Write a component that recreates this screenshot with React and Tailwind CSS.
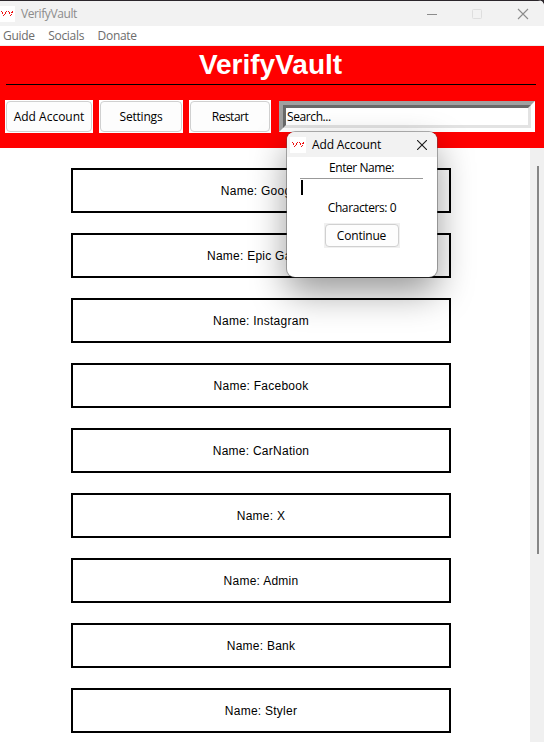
const ACCOUNTS = ['Google', 'Epic Games', 'Instagram', 'Facebook', 'CarNation', 'X', 'Admin', 'Bank', 'Styler'];

function Logo({ className }) {
  return (
    <svg className={className} width="16" height="16" viewBox="0 0 16 16" shapeRendering="crispEdges">
      <rect width="16" height="16" fill="#fff" />
      <path
        d="M2 5h1v1H2zM3 6h1v2H3zM4 9h1v1H4zM5 8h1v1H5zM6 6h1v2H6zM7 5h1v1H7zM9 5h1v1H9zM10 6h1v2h-1zM11 9h1v1h-1zM12 8h1v1h-1zM12 6h1v1h-1zM13 5h1v2h-1z"
        fill="#f01010"
      />
    </svg>
  );
}

function ToolButton({ className, children }) {
  return (
    <div className={`h-[33px] bg-white p-px ${className}`}>
      <button className="flex h-full w-full items-center justify-center rounded-[4px] border border-[#d0d0d0] bg-[#fdfdfd] pt-px text-[12px] whitespace-nowrap text-black">
        {children}
      </button>
    </div>
  );
}

function Dialog() {
  return (
    <div className="absolute top-[132px] left-[287px] h-[145px] w-[150px] rounded-[8px] bg-white shadow-[0_0_0_1px_rgba(80,80,80,0.45),0_16px_36px_rgba(0,0,0,0.4)]">
      <div className="flex h-[25px] items-center rounded-t-[8px] bg-[#f2f2f2] pl-[3px]">
        <Logo />
        <span className="ml-[6px] text-[12px] tracking-[-0.15px] text-black">Add Account</span>
        <svg className="mr-[10px] ml-auto" width="10" height="10" viewBox="0 0 10 10" stroke="#1a1a1a" strokeWidth="1.1">
          <path d="M0 0L10 10M10 0L0 10" />
        </svg>
      </div>
      <div className="flex h-[21px] items-center justify-center pt-px pr-px text-[12px] tracking-[-0.45px] text-black">
        Enter Name:
      </div>
      <div className="mx-[13px] h-[18px] w-[123px] border-t border-[#999] pt-px pl-px">
        <div className="h-[15px] w-[2px] bg-black" />
      </div>
      <div className="mt-[3px] flex h-[18px] items-center justify-center text-[12px] tracking-[-0.4px] text-black">
        Characters: 0
      </div>
      <div className="mx-auto mt-[6px] h-[25px] w-[76px] bg-[#f0f0f0] p-px">
        <button className="flex h-full w-full items-center justify-center rounded-[4px] border border-[#d0d0d0] bg-[#fdfdfd] pr-px text-[12px] tracking-[-0.2px] text-black">
          Continue
        </button>
      </div>
    </div>
  );
}

export default function App() {
  return (
    <div className="relative h-[742px] w-[544px] overflow-hidden bg-[#2b262b] font-['Open_Sans','Noto_Sans',sans-serif]">
      <div className="flex h-full flex-col overflow-hidden rounded-tr-[6px] bg-white">
        <div className="flex h-[26px] shrink-0 items-center border-t border-[#2b262b] bg-[#f2f2f2]">
          <Logo className="-ml-px" />
          <span className="ml-[6px] text-[12px] tracking-[-0.4px] text-[#8c8c8c]">VerifyVault</span>
          <svg className="ml-auto" width="117" height="24" viewBox="0 0 117 24" fill="none">
            <path d="M0 12.5H10" stroke="#8c8c8c" />
            <rect x="45.5" y="7.5" width="9" height="9" rx="1" stroke="#dedede" />
            <path d="M91 7L101 17M101 7L91 17" stroke="#8c8c8c" strokeWidth="1.1" />
          </svg>
        </div>
        <nav className="flex h-[20px] shrink-0 items-center gap-[13.5px] border-b border-[#eee] pl-[3px] text-[12px] tracking-[-0.3px] text-[#6d6d6d]">
          <span>Guide</span>
          <span>Socials</span>
          <span>Donate</span>
        </nav>
        <header className="h-[102px] shrink-0 bg-[#ff0000]">
          <h1 className="flex h-[38px] items-center justify-center pr-[3px] font-['Liberation_Sans',Arial,sans-serif] text-[28px] font-bold text-white">
            VerifyVault
          </h1>
          <div className="ml-[6px] h-px w-[530px] bg-black" />
          <div className="mt-[15px] flex pl-[5px]">
            <ToolButton className="w-[88px]">Add Account</ToolButton>
            <ToolButton className="ml-[6px] w-[84px] tracking-[-0.2px]">Settings</ToolButton>
            <ToolButton className="ml-[6px] w-[82px] tracking-[-0.5px]">Restart</ToolButton>
            <div className="mt-px ml-[8px] h-[31px] w-[256px] border-4 border-t-[#a0a0a0] border-r-white border-b-white border-l-[#a0a0a0]">
              <div className="flex h-full items-center border-3 border-t-[#696969] border-r-[#e3e3e3] border-b-[#e3e3e3] border-l-[#696969] bg-white pl-px text-[12px] tracking-[-0.4px] text-black">
                Search...
              </div>
            </div>
          </div>
        </header>
        <main className="flex min-h-0 flex-1">
          <div className="flex flex-1 flex-col gap-[20px] pt-[20px] pl-[71px]">
            {ACCOUNTS.map((name) => (
              <div
                key={name}
                className="flex h-[45px] w-[380px] shrink-0 items-center justify-center border-2 border-black font-['Liberation_Sans',Arial,sans-serif] text-[12px] tracking-[0.25px] whitespace-nowrap text-black"
              >
                Name: {name}
              </div>
            ))}
          </div>
          <div className="w-[14px] bg-[#f0f0f0] pt-[18px] pl-[7px]">
            <div className="h-[388px] w-[2px] bg-[#868686]" />
          </div>
        </main>
      </div>
      <Dialog />
    </div>
  );
}
